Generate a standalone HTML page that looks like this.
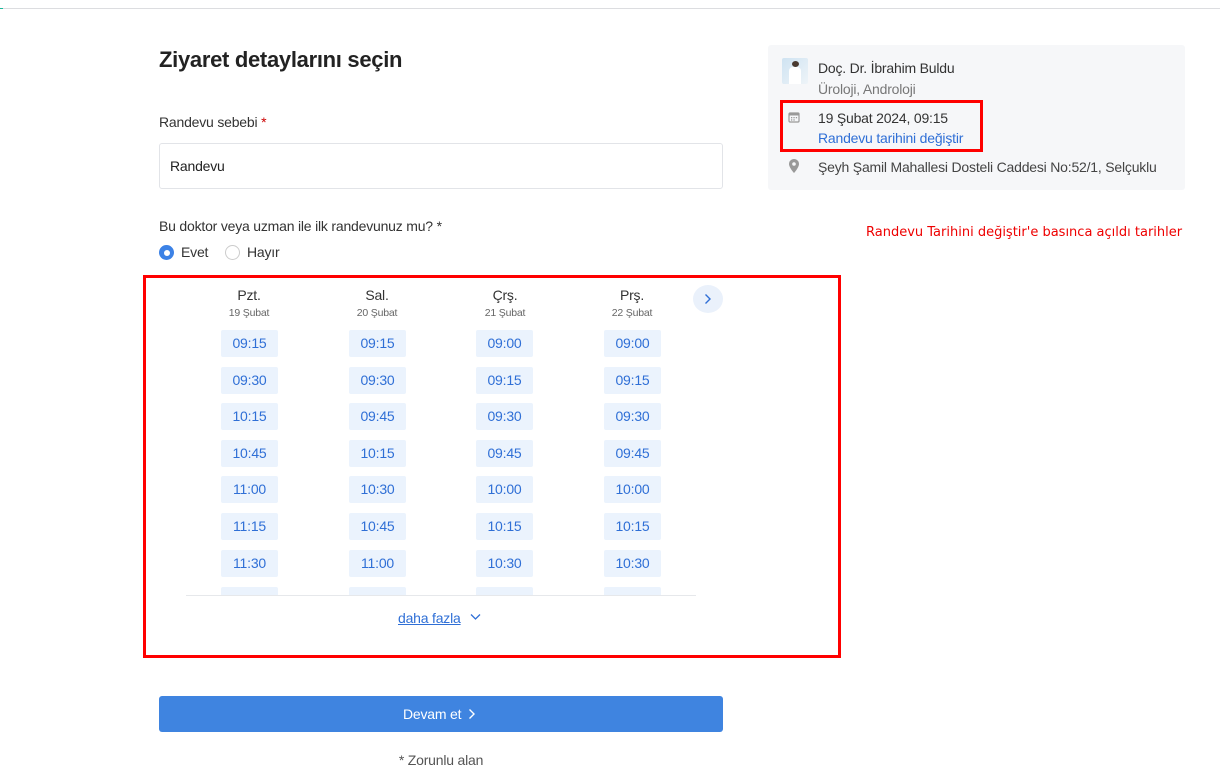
<!DOCTYPE html>
<html><head><meta charset="utf-8"><style>
*{box-sizing:border-box;margin:0;padding:0}
body{width:1220px;height:784px;background:#fff;font-family:"Liberation Sans",Arial,sans-serif;position:relative;overflow:hidden;color:#333;letter-spacing:-0.2px}
.a{position:absolute}
.slot{position:absolute;width:57px;height:27px;background:#ebf3fd;border-radius:2px;color:#2f6fd6;font-size:14px;text-align:center;line-height:27px}
.dn{position:absolute;width:100px;text-align:center;font-size:14px;color:#333}
.dd{position:absolute;width:100px;text-align:center;font-size:10.5px;color:#666}
</style></head><body>
<div class="a" style="left:0;top:8px;width:1220px;height:1px;background:#dcdde0"></div>
<div class="a" style="left:0;top:8px;width:3px;height:1px;background:#1bb89a"></div>
<div class="a" style="left:159px;top:47px;font-size:22px;font-weight:bold;color:#222;letter-spacing:-0.3px">Ziyaret detaylarını seçin</div>
<div class="a" style="left:159px;top:114px;font-size:14px;color:#333">Randevu sebebi <span style="color:#c00">*</span></div>
<div class="a" style="left:159px;top:143px;width:564px;height:46px;border:1px solid #e2e4e8;border-radius:3px;padding-left:10px;line-height:44px;font-size:14px;color:#222">Randevu</div>
<div class="a" style="left:159px;top:218px;font-size:14px;color:#333">Bu doktor veya uzman ile ilk randevunuz mu? *</div>
<div class="a" style="left:159px;top:245px;width:15px;height:15px;border-radius:50%;background:#3c82e6"><div style="margin:4.5px;width:6px;height:6px;border-radius:50%;background:#fff"></div></div>
<div class="a" style="left:181px;top:244px;font-size:14px">Evet</div>
<div class="a" style="left:225px;top:245px;width:15px;height:15px;border-radius:50%;border:1px solid #ccc"></div>
<div class="a" style="left:247px;top:244px;font-size:14px">Hayır</div>

<div class="a" style="left:768px;top:45px;width:417px;height:145px;background:#f6f7f9;border-radius:3px"></div>
<div class="a" style="left:782px;top:58px;width:26px;height:26px;background:linear-gradient(135deg,#cfe3f2,#eef4f8);border-radius:2px;overflow:hidden"><div style="position:absolute;left:10px;top:3px;width:7px;height:6px;border-radius:50%;background:#4a3a30"></div><div style="position:absolute;left:7px;top:9px;width:12px;height:17px;background:#fff;border-radius:4px 4px 0 0"></div></div>
<div class="a" style="left:818px;top:60px;font-size:14px;color:#333">Doç. Dr. İbrahim Buldu</div>
<div class="a" style="left:818px;top:81px;font-size:14px;color:#777">Üroloji, Androloji</div>
<svg class="a" style="left:788px;top:111px" width="12" height="12" viewBox="0 0 12 12"><rect x="1" y="2" width="10" height="9" rx="1" fill="none" stroke="#999" stroke-width="1.2"/><rect x="1" y="2" width="10" height="2.5" fill="#999"/><g fill="#999"><rect x="3" y="6" width="1.3" height="1.3"/><rect x="5.4" y="6" width="1.3" height="1.3"/><rect x="7.8" y="6" width="1.3" height="1.3"/><rect x="3" y="8.3" width="1.3" height="1.3"/><rect x="5.4" y="8.3" width="1.3" height="1.3"/></g></svg>
<div class="a" style="left:818px;top:110px;font-size:14px;color:#333">19 Şubat 2024, 09:15</div>
<div class="a" style="left:818px;top:130px;font-size:14px;color:#2f6fd6">Randevu tarihini değiştir</div>
<div class="a" style="left:780px;top:100px;width:203px;height:52px;border:3px solid #f00"></div>
<svg class="a" style="left:789px;top:159px" width="10" height="14" viewBox="0 0 10 14"><path d="M5 0C2.2 0 0 2.2 0 5c0 3.5 5 9 5 9s5-5.5 5-9C10 2.2 7.8 0 5 0z" fill="#999"/><circle cx="5" cy="5" r="1.8" fill="#f6f7f9"/></svg>
<div class="a" style="left:818px;top:159px;font-size:14px;color:#444">Şeyh Şamil Mahallesi Dosteli Caddesi No:52/1, Selçuklu</div>
<div class="a" style="left:866px;top:225px;color:#e00;font-family:'DejaVu Sans',sans-serif;font-size:13px;letter-spacing:0">Randevu Tarihini değiştir'e basınca açıldı tarihler</div>

<div class="a" style="left:143px;top:275px;width:698px;height:383px;border:3px solid #f00"></div>
<div class="dn" style="left:199px;top:287px">Pzt.</div><div class="dd" style="left:199px;top:307px">19 Şubat</div>
<div class="dn" style="left:327px;top:287px">Sal.</div><div class="dd" style="left:327px;top:307px">20 Şubat</div>
<div class="dn" style="left:455px;top:287px">Çrş.</div><div class="dd" style="left:455px;top:307px">21 Şubat</div>
<div class="dn" style="left:582px;top:287px">Prş.</div><div class="dd" style="left:582px;top:307px">22 Şubat</div>
<div class="a" style="left:693px;top:285px;width:30px;height:28px;border-radius:50%;background:#eaf1fb"></div>
<svg class="a" style="left:704px;top:293px" width="8" height="12" viewBox="0 0 8 12"><path d="M1.5 1.5l4.5 4.5-4.5 4.5" fill="none" stroke="#2f6fd6" stroke-width="1.4"/></svg>
<div class="a" style="left:186px;top:320px;width:510px;height:275px;overflow:hidden">
<div class="slot" style="left:35px;top:10px">09:15</div><div class="slot" style="left:163px;top:10px">09:15</div><div class="slot" style="left:290px;top:10px">09:00</div><div class="slot" style="left:418px;top:10px">09:00</div>
<div class="slot" style="left:35px;top:47px">09:30</div><div class="slot" style="left:163px;top:47px">09:30</div><div class="slot" style="left:290px;top:47px">09:15</div><div class="slot" style="left:418px;top:47px">09:15</div>
<div class="slot" style="left:35px;top:83px">10:15</div><div class="slot" style="left:163px;top:83px">09:45</div><div class="slot" style="left:290px;top:83px">09:30</div><div class="slot" style="left:418px;top:83px">09:30</div>
<div class="slot" style="left:35px;top:120px">10:45</div><div class="slot" style="left:163px;top:120px">10:15</div><div class="slot" style="left:290px;top:120px">09:45</div><div class="slot" style="left:418px;top:120px">09:45</div>
<div class="slot" style="left:35px;top:156px">11:00</div><div class="slot" style="left:163px;top:156px">10:30</div><div class="slot" style="left:290px;top:156px">10:00</div><div class="slot" style="left:418px;top:156px">10:00</div>
<div class="slot" style="left:35px;top:193px">11:15</div><div class="slot" style="left:163px;top:193px">10:45</div><div class="slot" style="left:290px;top:193px">10:15</div><div class="slot" style="left:418px;top:193px">10:15</div>
<div class="slot" style="left:35px;top:230px">11:30</div><div class="slot" style="left:163px;top:230px">11:00</div><div class="slot" style="left:290px;top:230px">10:30</div><div class="slot" style="left:418px;top:230px">10:30</div>
<div class="slot" style="left:35px;top:267px"></div><div class="slot" style="left:163px;top:267px"></div><div class="slot" style="left:290px;top:267px"></div><div class="slot" style="left:418px;top:267px"></div>
</div>
<div class="a" style="left:186px;top:595px;width:510px;height:1px;background:#e6e8eb"></div>
<div class="a" style="left:398px;top:610px;font-size:14px;color:#2f6fd6;text-decoration:underline">daha fazla</div>
<svg class="a" style="left:470px;top:613px" width="11" height="8" viewBox="0 0 11 8"><path d="M1 1.5l4.5 4.5 4.5-4.5" fill="none" stroke="#2f6fd6" stroke-width="1.3"/></svg>

<div class="a" style="left:159px;top:696px;width:564px;height:36px;background:#3f84e0;border-radius:3px"></div>
<div class="a" style="left:403px;top:706px;font-size:14px;color:#fff">Devam et</div>
<svg class="a" style="left:468px;top:708px" width="8" height="12" viewBox="0 0 8 12"><path d="M1.5 1.5l4.5 4.5-4.5 4.5" fill="none" stroke="#fff" stroke-width="1.4"/></svg>
<div class="a" style="left:159px;top:752px;width:564px;text-align:center;font-size:14px;color:#555">* Zorunlu alan</div>
</body></html>
